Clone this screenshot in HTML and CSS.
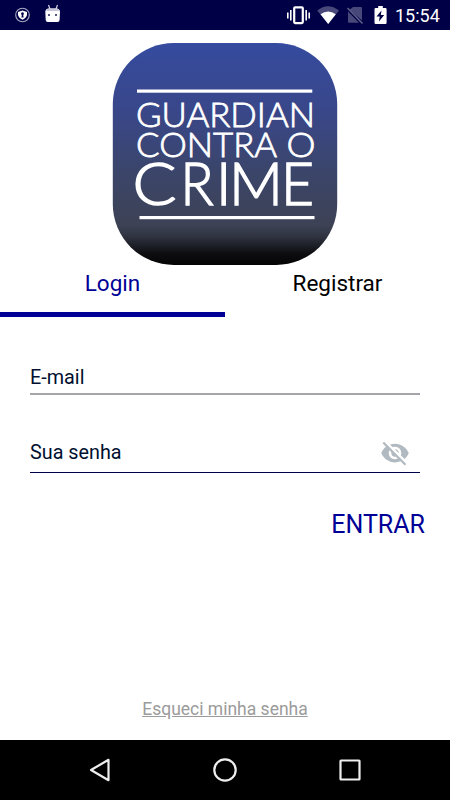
FILE: index.html
```
<!DOCTYPE html>
<html lang="pt-BR">
<head>
<meta charset="UTF-8">
<meta name="viewport" content="width=device-width, initial-scale=1.0">
<title>Guardian Contra o Crime</title>
<link rel="stylesheet" href="styles.css">
</head>
<body>
    <div class="status-bar">
        <svg class="status-icons" width="70" height="30" viewBox="0 0 70 30">
            <circle cx="22.5" cy="15" r="6.8" fill="none" stroke="#a9a9c4" stroke-width="1.1"/>
            <path d="M18 12l4.5-1.6L27 12v2.5c0 2.2-2 4-4.5 5.2-2.5-1.2-4.5-3-4.5-5.2z" fill="#fff"/>
            <path d="M22.5 12.3a1.4 1.4 0 0 1 .7 2.6l.4 2.5h-2.200l.4-2.5a1.4 1.4 0 0 1 .7-2.6z" fill="#000047"/>
            <path d="M48.5 5l1.500 4M57.500 5L56 9" stroke="#d5d5e2" stroke-width="1.2"/>
            <path d="M45.300 12q0-3.500 3.500-3.500h7.700q3.500 0 3.500 3.500l-.4 8q-.1 2-2.100 2h-9.700q-2 0-2.100-2z" fill="#fff"/>
            <path d="M46 11q.5-2.500 3-2.500h7.500q2.500 0 3 2.500z" fill="#c6c6d8"/>
            <path d="M48 14h2v2h-2zM55 14h2v2h-2z" fill="#55557f"/>
        </svg>
        <div class="status-right">
            <svg width="108" height="30" viewBox="0 0 108 30">
                <path d="M7.800 12.500v6M10.800 10v10.500M26.200 10v10.500M29.200 12.500v6" stroke="#fff" stroke-width="1.6"/>
                <rect x="14.2" y="7.3" width="8.6" height="15.8" rx="1" fill="none" stroke="#fff" stroke-width="2.2"/>
                <path d="M37.200 10.500q10.800-8.500 21.800 0L48.200 24z" fill="#48487b"/>
                <path d="M40.500 14.200q7.700-5.500 15.300 0L48.200 24z" fill="#fff"/>
                <path d="M73 7h8q1 0 1 1v12.500L69.500 9.800zM68 11.500L79 22.800H69q-1 0-1-1z" fill="#48487b"/>
                <path d="M67.500 8L82.500 23.500" stroke="#62628c" stroke-width="1.5"/>
                <path d="M98.200 6h4.600v2h2.600q1.200 0 1.200 1.200v13.600q0 1.200-1.200 1.200h-9.700q-1.200 0-1.200-1.200V9.200Q94.500 8 95.700 8h2.500z" fill="#fff"/>
                <path d="M101.500 10.500l-5 6h3.200l-.7 5 5.200-6.500h-3.400z" fill="#000047"/>
            </svg>
            <span class="clock">15:54</span>
        </div>
    </div>

    <div class="content">
        <svg class="logo" width="226" height="224" viewBox="0 0 226 224">
            <defs>
                <linearGradient id="fundo" x1="0" y1="0" x2="0" y2="1">
                    <stop offset="0" stop-color="#354b9f"/>
                    <stop offset=".3" stop-color="#39478a"/>
                    <stop offset=".6" stop-color="#3b4568"/>
                    <stop offset=".82" stop-color="#3d4255"/>
                    <stop offset=".87" stop-color="#303441"/>
                    <stop offset=".95" stop-color="#0d0d10"/>
                    <stop offset="1" stop-color="#040404"/>
                </linearGradient>
            </defs>
            <rect x=".8" y="1" width="224.4" height="222" rx="61" fill="url(#fundo)"/>
            <rect x="25" y="47.5" width="175.3" height="3.2" fill="#fff"/>
            <g class="logo-text">
                <text x="24" y="84.5" font-size="34" textLength="179" lengthAdjust="spacingAndGlyphs">GUARDIAN</text>
                <text x="24" y="114.5" font-size="34"><tspan textLength="140" lengthAdjust="spacingAndGlyphs">CONTRA</tspan> <tspan x="174.5" textLength="29" lengthAdjust="spacingAndGlyphs">O</tspan></text>
                <text class="big" x="20.5" y="163.2" font-size="59"><tspan textLength="44" lengthAdjust="spacingAndGlyphs">C</tspan><tspan x="68.5" textLength="33" lengthAdjust="spacingAndGlyphs">R</tspan><tspan x="104">I</tspan><tspan x="117" textLength="54" lengthAdjust="spacingAndGlyphs">M</tspan><tspan x="169" textLength="33" lengthAdjust="spacingAndGlyphs">E</tspan></text>
            </g>
            <rect x="27.5" y="174" width="175" height="3.2" fill="#fff"/>
        </svg>

        <div class="tabs">
            <div class="tab active">Login</div>
            <div class="tab">Registrar</div>
        </div>

        <div class="form">
            <div class="field">
                <span>E-mail</span>
            </div>
            <div class="field focused">
                <span>Sua senha</span>
                <svg class="eye" width="30" height="30" viewBox="0 0 24 24">
                    <path d="M12 7c2.760 0 5 2.240 5 5 0 .65-.13 1.260-.36 1.830l2.920 2.920c1.510-1.260 2.700-2.890 3.430-4.750-1.730-4.390-6-7.500-11-7.500-1.400 0-2.740.25-3.980.7l2.160 2.160C10.740 7.130 11.350 7 12 7zM2 4.270l2.280 2.280.46.46C3.080 8.300 1.780 10.020 1 12c1.730 4.390 6 7.500 11 7.500 1.550 0 3.030-.3 4.380-.84l.42.42L19.730 22 21 20.730 3.270 3 2 4.270zM7.530 9.800l1.550 1.550c-.05.21-.08.43-.08.65 0 1.660 1.340 3 3 3 .22 0 .44-.03.65-.08l1.550 1.550c-.67.33-1.410.53-2.200.53-2.760 0-5-2.240-5-5 0-.79.2-1.530.53-2.200zm4.310-.78l3.150 3.150.02-.16c0-1.660-1.340-3-3-3l-.17.01z"/>
                </svg>
            </div>
            <div class="enter">ENTRAR</div>
        </div>

        <a class="forgot" href="#">Esqueci minha senha</a>
    </div>

    <div class="nav-bar">
        <svg width="30" height="30" viewBox="0 0 30 30">
            <path d="M6 15L23.500 4.800v20.400z" stroke-linejoin="round"/>
        </svg>
        <svg width="30" height="30" viewBox="0 0 30 30">
            <circle cx="15" cy="15" r="10.7"/>
        </svg>
        <svg width="30" height="30" viewBox="0 0 30 30">
            <rect x="5.5" y="5.5" width="19" height="19" rx=".5"/>
        </svg>
    </div>
</body>
</html>
```
FILE: styles.css
```
body {
    font-family: Roboto, "Liberation Sans", sans-serif;
    margin: 0;
    display: flex;
    flex-direction: column;
    height: 100vh;
    background-color: #fff;
    color: #000;
}
svg {
    display: block;
}
/* status bar */
.status-bar {
    display: flex;
    justify-content: space-between;
    height: 30px;
    flex-shrink: 0;
    background-color: #000047;
}
.status-right {
    display: flex;
    width: 170px;
}
.clock {
    margin-left: 7px;
    font-size: 18px;
    line-height: 31px;
    color: #fff;
}
/* main area */
.content {
    flex: 1;
    display: flex;
    flex-direction: column;
    align-items: center;
    padding-top: 12px;
}
.logo-text {
    font-family: Lato, sans-serif;
    font-weight: 300;
    fill: #fff;
    stroke: #fff;
    stroke-width: 0.8px;
}
.logo-text .big {
    stroke-width: 1.5px;
}
/* tabs */
.tabs {
    display: flex;
    width: 100%;
}
.tab {
    flex: 1;
    height: 46px;
    line-height: 35px;
    font-size: 22.5px;
    text-align: center;
    border-bottom: 5px solid transparent;
}
.tab.active {
    color: #000096;
    border-bottom-color: #000096;
}
/* form */
.form {
    width: 390px;
    padding-top: 41px;
}
.field {
    display: flex;
    justify-content: space-between;
    align-items: center;
    height: 35px;
    font-size: 19.8px;
    color: #001030;
    border-bottom: 2px solid #a4a6ab;
}
.field span {
    padding-top: 4px;
}
.field.focused {
    margin-top: 42px;
    border-bottom: 1px solid #000047;
}
.field.focused span {
    padding: 0 0 5px;
}
.eye {
    margin: 0 10px 3px 0;
    fill: #b2bac1;
}
.enter {
    margin: 36px -5px 0 0;
    font-size: 25px;
    line-height: 32px;
    text-align: right;
    color: #000096;
}
.forgot {
    margin-top: auto;
    margin-bottom: 20px;
    font-size: 17.5px;
    line-height: 22px;
    color: #9b9b9b;
}
/* android buttons */
.nav-bar {
    display: flex;
    justify-content: center;
    align-items: center;
    gap: 95px;
    height: 60px;
    flex-shrink: 0;
    background-color: #000;
}
.nav-bar svg {
    fill: none;
    stroke: #eee;
    stroke-width: 2.2;
}
```
